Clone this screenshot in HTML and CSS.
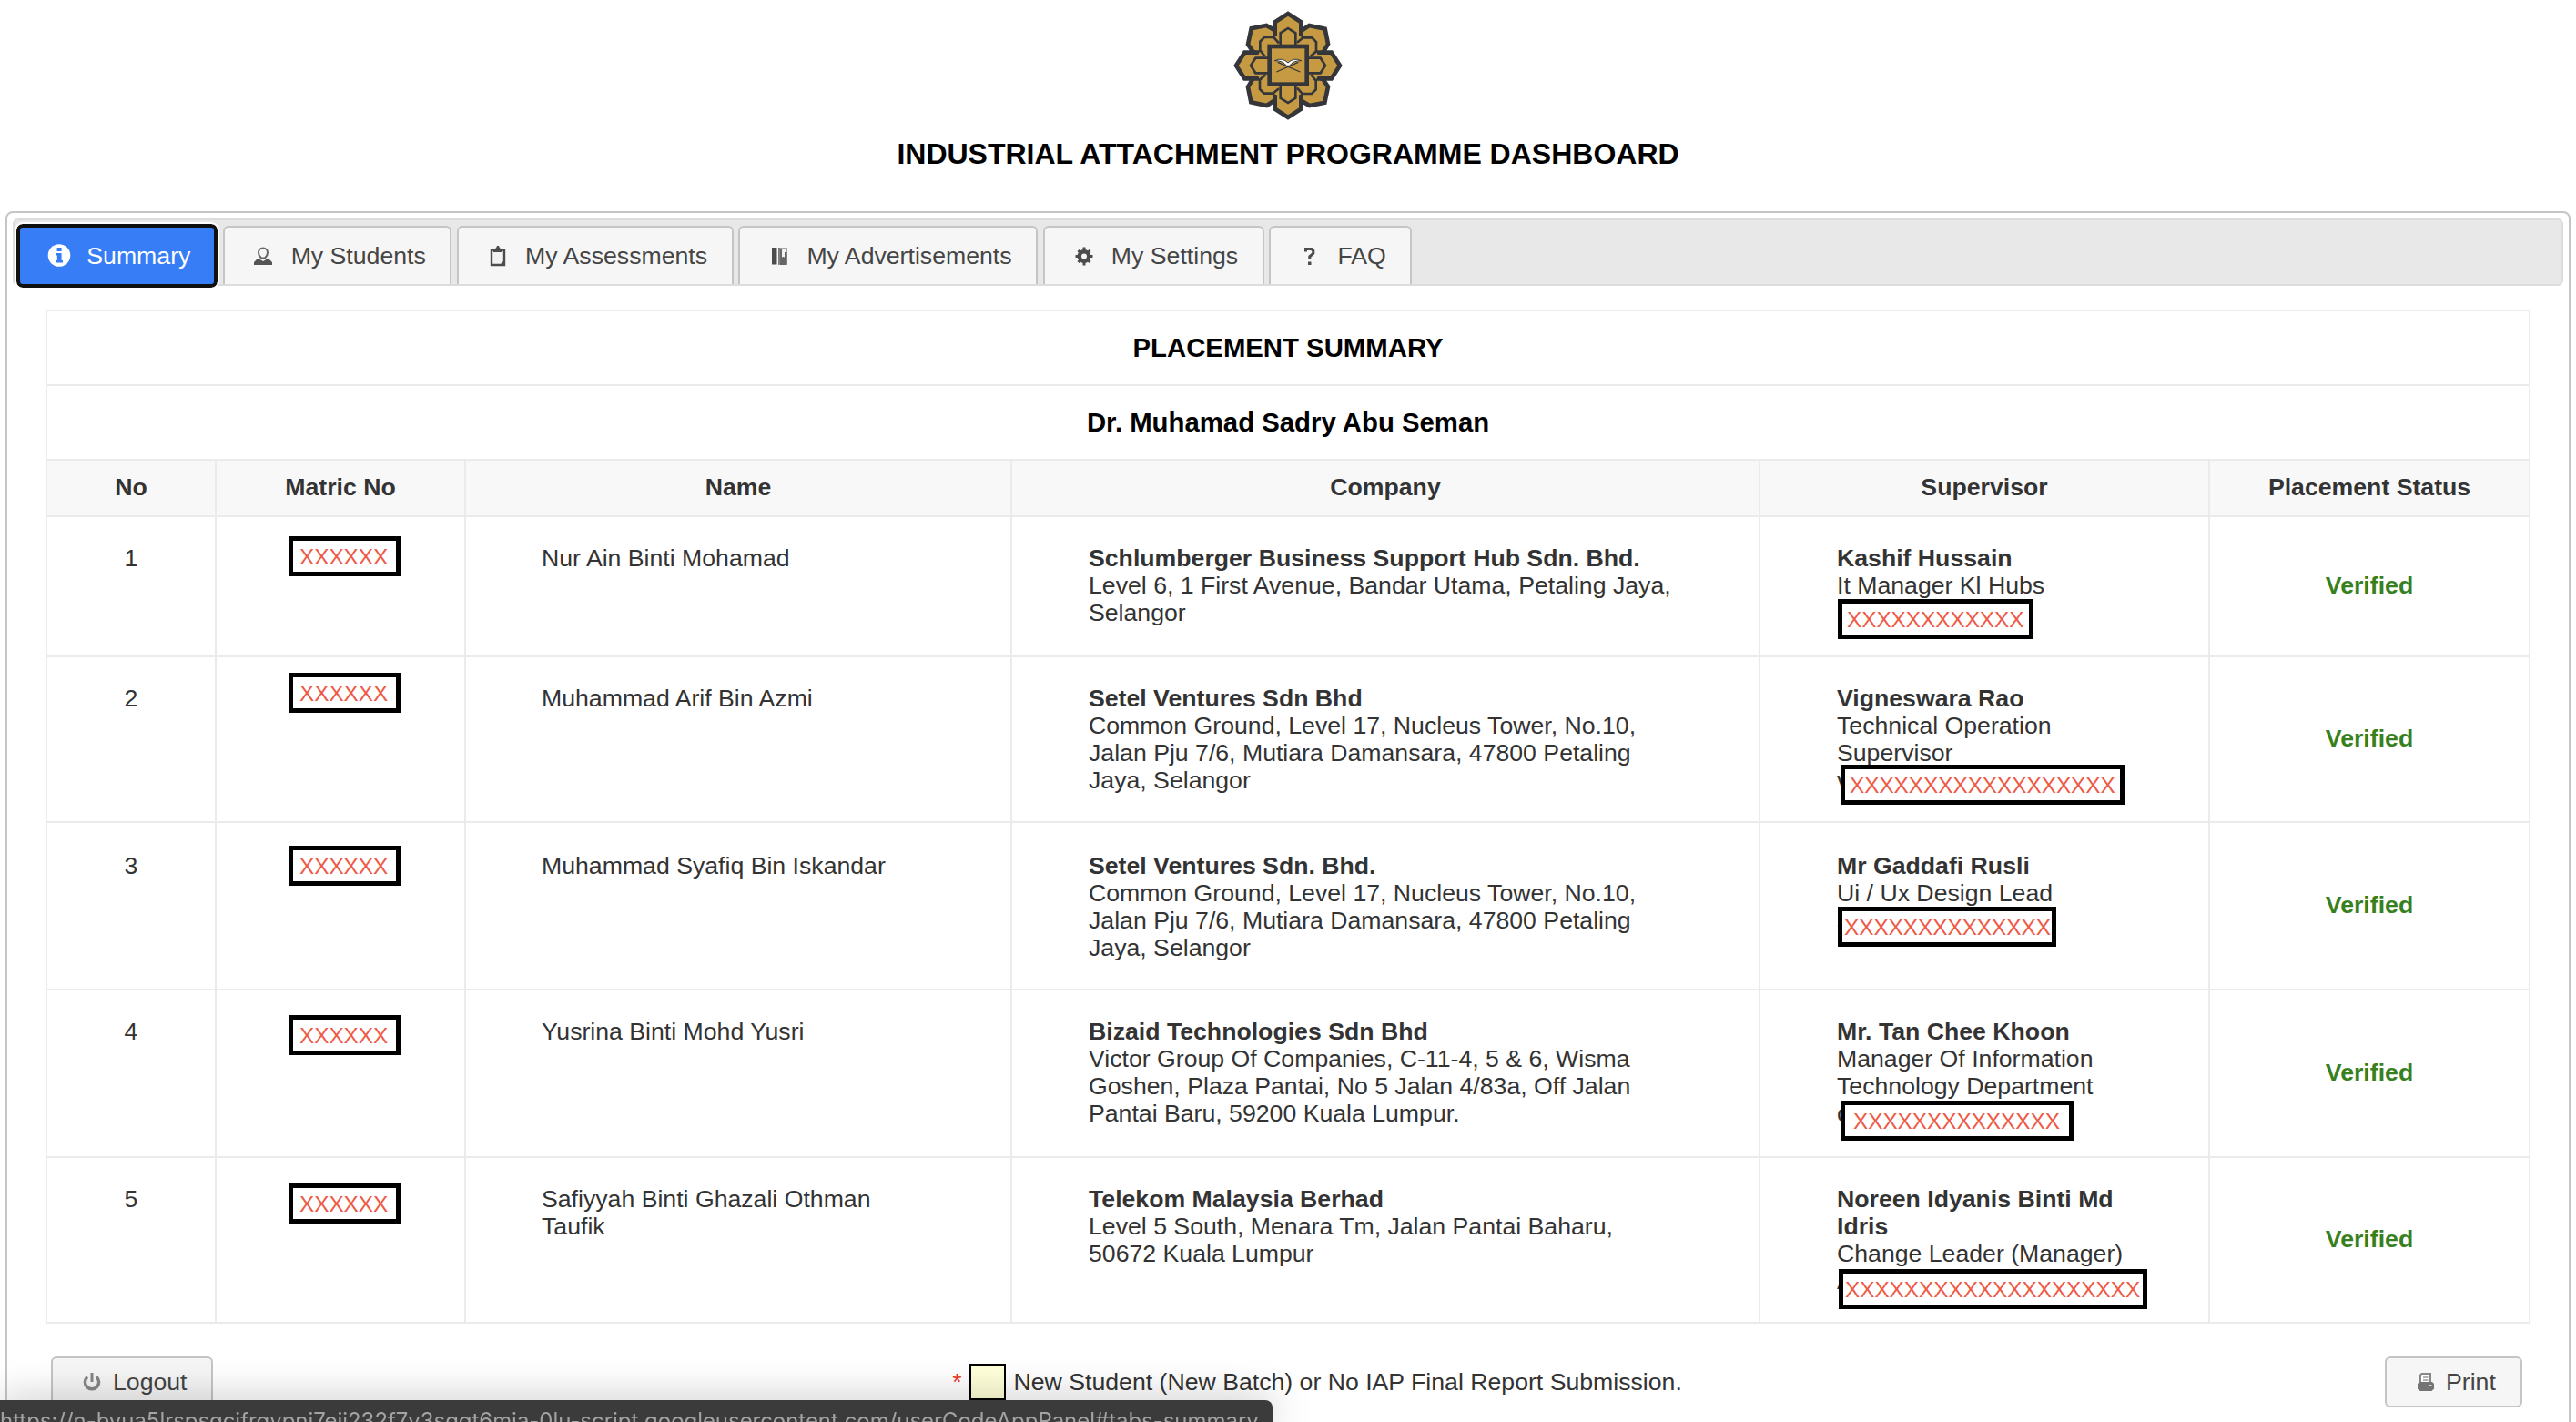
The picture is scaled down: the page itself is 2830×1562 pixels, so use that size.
FILE: index.html
```html
<!DOCTYPE html>
<html lang="en">
<head>
<meta charset="utf-8">
<title>Industrial Attachment Programme Dashboard</title>
<link rel="stylesheet" href="styles.css">
</head>
<body>
<header class="masthead">
  <svg class="logo" viewBox="48 36 360 360">
    <defs>
      <path id="diag" d="M192 112 L184 100 L157 84 L107 94 L96 146 L112 170 L130 178"/>
      <path id="card" d="M185 124 V73 L228 45 L271 73 V124"/>
      <path id="diag-in" d="M198 142 L181 123 L150 123 L136 137 V166 L152 186"/>
      <path id="card-in" d="M203 152 V109 L228 93 L253 109 V152"/>
    </defs>
    <g class="petal">
      <use href="#diag"/><use href="#diag" transform="rotate(90 228 216)"/><use href="#diag" transform="rotate(180 228 216)"/><use href="#diag" transform="rotate(270 228 216)"/>
      <use href="#card"/><use href="#card" transform="rotate(90 228 216)"/><use href="#card" transform="rotate(180 228 216)"/><use href="#card" transform="rotate(270 228 216)"/>
    </g>
    <circle class="core" cx="228" cy="216" r="104"/>
    <g class="petal thin">
      <use href="#diag-in"/><use href="#diag-in" transform="rotate(90 228 216)"/><use href="#diag-in" transform="rotate(180 228 216)"/><use href="#diag-in" transform="rotate(270 228 216)"/>
      <use href="#card-in"/><use href="#card-in" transform="rotate(90 228 216)"/><use href="#card-in" transform="rotate(180 228 216)"/><use href="#card-in" transform="rotate(270 228 216)"/>
    </g>
    <rect class="petal" x="167" y="153" width="123" height="125"/>
    <path d="M190 237 L262 205 M268 237 L194 205" stroke="#35363a" stroke-width="4" fill="none"/>
    <path d="M184 200 Q210 188 228 207 Q246 188 272 200 Q246 199 232 217 H224 Q210 199 184 200Z" fill="#fff" stroke="#35363a" stroke-width="3"/>
  </svg>
  <h1>INDUSTRIAL ATTACHMENT PROGRAMME DASHBOARD</h1>
</header>

<main class="panel">
  <nav class="tabs">
    <a class="tab active"><svg class="icon" viewBox="0 0 32 32"><circle cx="16" cy="15.5" r="12.3" fill="#fff"/><path d="M13.6 7h5v4h-5zM12.4 13h6.2v8h1.4v2.6h-7.8V21h1.6v-5.4h-1.4z" fill="#377df6"/></svg>Summary</a>
    <a class="tab"><svg class="icon" viewBox="0 0 32 32"><path d="M16 7.5c3 0 5 2.2 5 5 0 2.500-1.500 4.500-3 6h-4c-1.500-1.500-3-3.500-3-6 0-2.800 2-5 5-5z" fill="none" stroke="#666" stroke-width="2"/><path d="M6 26v-3l3-3h3.500l3.500 2 3.500-2H23l3 3v3z" fill="#555"/></svg>My Students</a>
    <a class="tab"><svg class="icon" viewBox="0 0 32 32"><path d="M9 9.500h14V26H9z" fill="#f2f2f2" stroke="#4c4c4c" stroke-width="2.400"/><path d="M11 12V8.500l3-1 1-2.500h2l1 2.500 3 1V12z" fill="#4c4c4c"/><path d="M18 26l4-4v4z" fill="#4c4c4c"/></svg>My Assessments</a>
    <a class="tab"><svg class="icon" viewBox="0 0 32 32"><path d="M8 7h5.500v18.500H8zM15 7h1.800v18.500H15z" fill="#4c4c4c"/><path d="M16 8h8v17h-8z" fill="none" stroke="#888" stroke-width="1.600"/><path d="M17 8h2v9h3v-5h2.500v14H17z" fill="#666"/><path d="M19 8h3v10l-1.500-2-1.500 2z" fill="#f2f2f2"/></svg>My Advertisements</a>
    <a class="tab"><svg class="icon" viewBox="0 0 32 32"><circle cx="16" cy="16.500" r="5.200" fill="none" stroke="#4c4c4c" stroke-width="4.400"/><path d="M16 6.500v4M16 22.500v4M6.500 16.500h4M21.500 16.500h4M9.500 10l2.500 2.500M20 20.500l2.500 2.500M22.500 10 20 12.500M12 20.500 9.500 23" stroke="#4c4c4c" stroke-width="3"/></svg>My Settings</a>
    <a class="tab"><svg class="icon" viewBox="0 0 32 32"><path d="M11.500 11.500V8.600h6.500l1.800 1.800v3l-4 3.400V20" fill="none" stroke="#4c4c4c" stroke-width="3"/><path d="M14 22.500h3.500V26H14z" fill="#4c4c4c"/></svg>FAQ</a>
  </nav>

  <table class="summary">
    <colgroup><col class="c-no"><col class="c-matric"><col class="c-name"><col class="c-company"><col class="c-sup"><col class="c-status"></colgroup>
    <thead>
      <tr class="banner"><th colspan="6">PLACEMENT SUMMARY</th></tr>
      <tr class="banner"><th colspan="6">Dr. Muhamad Sadry Abu Seman</th></tr>
      <tr class="heads"><th>No</th><th>Matric No</th><th>Name</th><th>Company</th><th>Supervisor</th><th>Placement Status</th></tr>
    </thead>
    <tbody>
      <tr class="r1">
        <td class="no">1</td>
        <td><span class="mask matric">XXXXXX</span></td>
        <td>Nur Ain Binti Mohamad</td>
        <td><b>Schlumberger Business Support Hub Sdn. Bhd.</b><br>Level 6, 1 First Avenue, Bandar Utama, Petaling Jaya,<br>Selangor</td>
        <td><b>Kashif Hussain</b><br>It Manager Kl Hubs<br><span class="mask email">XXXXXXXXXXXX</span></td>
        <td class="status">Verified</td>
      </tr>
      <tr class="r2">
        <td class="no">2</td>
        <td><span class="mask matric">XXXXXX</span></td>
        <td>Muhammad Arif Bin Azmi</td>
        <td><b>Setel Ventures Sdn Bhd</b><br>Common Ground, Level 17, Nucleus Tower, No.10,<br>Jalan Pju 7/6, Mutiara Damansara, 47800 Petaling<br>Jaya, Selangor</td>
        <td><b>Vigneswara Rao</b><br>Technical Operation<br>Supervisor<br>v<span class="mask email">XXXXXXXXXXXXXXXXXX</span></td>
        <td class="status">Verified</td>
      </tr>
      <tr class="r3">
        <td class="no">3</td>
        <td><span class="mask matric">XXXXXX</span></td>
        <td>Muhammad Syafiq Bin Iskandar</td>
        <td><b>Setel Ventures Sdn. Bhd.</b><br>Common Ground, Level 17, Nucleus Tower, No.10,<br>Jalan Pju 7/6, Mutiara Damansara, 47800 Petaling<br>Jaya, Selangor</td>
        <td><b>Mr Gaddafi Rusli</b><br>Ui / Ux Design Lead<br>s<span class="mask email">XXXXXXXXXXXXXX</span></td>
        <td class="status">Verified</td>
      </tr>
      <tr class="r4">
        <td class="no">4</td>
        <td><span class="mask matric">XXXXXX</span></td>
        <td>Yusrina Binti Mohd Yusri</td>
        <td><b>Bizaid Technologies Sdn Bhd</b><br>Victor Group Of Companies, C-11-4, 5 &amp; 6, Wisma<br>Goshen, Plaza Pantai, No 5 Jalan 4/83a, Off Jalan<br>Pantai Baru, 59200 Kuala Lumpur.</td>
        <td><b>Mr. Tan Chee Khoon</b><br>Manager Of Information<br>Technology Department<br>c<span class="mask email">XXXXXXXXXXXXXX</span></td>
        <td class="status">Verified</td>
      </tr>
      <tr class="r5">
        <td class="no">5</td>
        <td><span class="mask matric">XXXXXX</span></td>
        <td>Safiyyah Binti Ghazali Othman<br>Taufik</td>
        <td><b>Telekom Malaysia Berhad</b><br>Level 5 South, Menara Tm, Jalan Pantai Baharu,<br>50672 Kuala Lumpur</td>
        <td><b>Noreen Idyanis Binti Md<br>Idris</b><br>Change Leader (Manager)<br>A<span class="mask email">XXXXXXXXXXXXXXXXXXXX</span></td>
        <td class="status">Verified</td>
      </tr>
    </tbody>
  </table>

  <footer class="actions">
    <button class="btn logout"><svg class="icon" viewBox="0 0 32 32"><path d="M11 10.500a7.600 7.600 0 1 0 10 0" fill="none" stroke="#868686" stroke-width="3.400"/><path d="M16 6v10" stroke="#868686" stroke-width="3"/></svg>Logout</button>
    <p class="legend"><span>*</span><i></i>New Student (New Batch) or No IAP Final Report Submission.</p>
    <button class="btn print"><svg class="icon" viewBox="0 0 32 32"><path d="M10 17V8.500L11.500 7h9.500v10" fill="#fff" stroke="#888" stroke-width="2"/><path d="M13 11h5.500M13 14h5.500" stroke="#999" stroke-width="1.400"/><path d="M7 18l2-2h14l2 2v5.500L22.500 26h-13L7 23.500z" fill="#757575"/><path d="M19 19h3.500v2H19z" fill="#ddd"/></svg>Print</button>
  </footer>
</main>

<div class="statusbar">https://n-byua5lrspsqcifrqvpnj7ejj232f7y3sqqt6mja-0lu-script.googleusercontent.com/userCodeAppPanel#tabs-summary</div>
</body>
</html>
```
FILE: styles.css
```css
* { box-sizing: border-box; }
html, body { height: 100%; overflow: hidden; }
body {
  margin: 0;
  background: #fff;
  color: #333;
  font: 26.67px/30px "Liberation Sans", Arial, sans-serif;
}

.masthead {
  height: 232px;
  padding-top: 12px;
  display: flex;
  flex-direction: column;
  align-items: center;
}
.logo { width: 120px; height: 120px; }
.petal { fill: #c69a42; stroke: #35363a; stroke-width: 14; }
.petal.thin { stroke-width: 8; }
.core { fill: #c69a42; }
h1 { margin: 19px 0 0; font-size: 32px; line-height: 36px; color: #000; }

.panel {
  height: 1400px;
  margin: 0 6px;
  padding: 6px;
  border: 2px solid #c5c5c5;
  border-radius: 8px;
}

.tabs {
  height: 74px;
  display: flex;
  align-items: flex-end;
  gap: 5.7px;
  padding-left: 2px;
  background: #e8e8e8;
  border: 2px solid #dcdcdc;
  border-radius: 6px;
}
.tab {
  height: 64px;
  display: flex;
  align-items: center;
  gap: 14.3px;
  padding: 0 26.67px;
  background: #f6f6f6;
  border: 2px solid #c5c5c5;
  border-bottom: 0;
  border-radius: 6px 6px 0 0;
  color: #454545;
}
.tab.active {
  width: 221px;
  height: 70px;
  margin-bottom: -4px;
  padding: 0 0 0 27px;
  background: #377df6;
  border: 4px solid #101010;
  border-radius: 7px;
  outline: 2px solid #fff;
  color: #fff;
}
.icon { width: 32px; height: 32px; flex: none; }

.summary {
  width: 2730px;
  margin: 26px 0 0 36px;
  table-layout: fixed;
  border-collapse: collapse;
}
.c-no { width: 186px; }
.c-matric { width: 274px; }
.c-name { width: 600px; }
.c-company { width: 822px; }
.c-sup { width: 494px; }
.c-status { width: 352px; }
.summary th, .summary td { border: 2px solid #e9ebec; }
.banner { height: 82px; }
.banner th { padding: 0; font-size: 29.33px; line-height: 34px; color: #000; }
.heads { height: 62px; background: #f8f8f8; }
.heads th { padding: 0 0 3px; }
.summary td {
  position: relative;
  padding: 30px 0 0 84px;
  vertical-align: top;
  white-space: nowrap;
}
.summary td:nth-child(3) { padding-left: 83px; }
.summary td.no { padding-left: 0; text-align: center; }
.summary td.status {
  padding: 0 0 3px;
  vertical-align: middle;
  text-align: center;
  font-weight: bold;
  color: #378020;
}
.r1 { height: 154px; }
.r2 { height: 182px; }
.r3 { height: 184px; }
.r4 { height: 184px; }
.r5 { height: 182px; }
.summary .r3 td:not(.status) { padding-top: 32px; }

/* Redaction boxes cover the matric numbers and e-mail addresses */
.mask {
  position: absolute;
  height: 44px;
  border: 5px solid #000;
  background: #fff;
  color: #ee5a47;
  font-size: 24.3px;
  line-height: 35px;
}
.matric { left: 79px; width: 123px; padding-left: 7px; }
.r1 .matric { top: 21px; }
.r2 .matric { top: 17px; }
.r3 .matric { top: 25px; }
.r4 .matric { top: 27px; }
.r5 .matric { top: 28px; }
.r1 .email { left: 85px; top: 90px; width: 215px; padding-left: 5px; }
.r2 .email { left: 88px; top: 118px; width: 312px; padding-left: 5px; }
.r3 .email { left: 85px; top: 92px; width: 240px; padding-left: 2px; }
.r4 .email { left: 88px; top: 121px; width: 256px; padding-left: 9px; }
.r5 .email { left: 86px; top: 122px; width: 339px; padding-left: 2px; }

.actions {
  display: flex;
  justify-content: space-between;
  align-items: flex-start;
  margin: 36px 45px 0 42px;
}
.btn {
  height: 56px;
  display: flex;
  align-items: center;
  padding: 0 0 0 27px;
  border: 2px solid #c5c5c5;
  border-radius: 6px;
  background: #f6f6f6;
  color: #454545;
  font: inherit;
}
.btn.logout { width: 178px; gap: 7px; }
.btn.print { width: 151px; gap: 6px; }
.legend { margin: 0 0 0 40px; display: flex; align-items: center; height: 56px; }
.legend span { margin-right: 8px; color: #ee3524; }
.legend i { width: 40px; height: 40px; margin-right: 9px; border: 2px solid #000; background: #ffffd9; }

.statusbar {
  position: fixed;
  left: 0;
  bottom: 0;
  width: 1398px;
  height: 24px;
  padding-top: 8px;
  overflow: hidden;
  white-space: nowrap;
  border-radius: 0 8px 0 0;
  background: #3b3b3b;
  box-shadow: 0 0 44px rgba(0, 0, 0, .28);
  color: #a3a3a3;
  font: 24px/30px Inter, sans-serif;
  letter-spacing: -.045px;
}
```
